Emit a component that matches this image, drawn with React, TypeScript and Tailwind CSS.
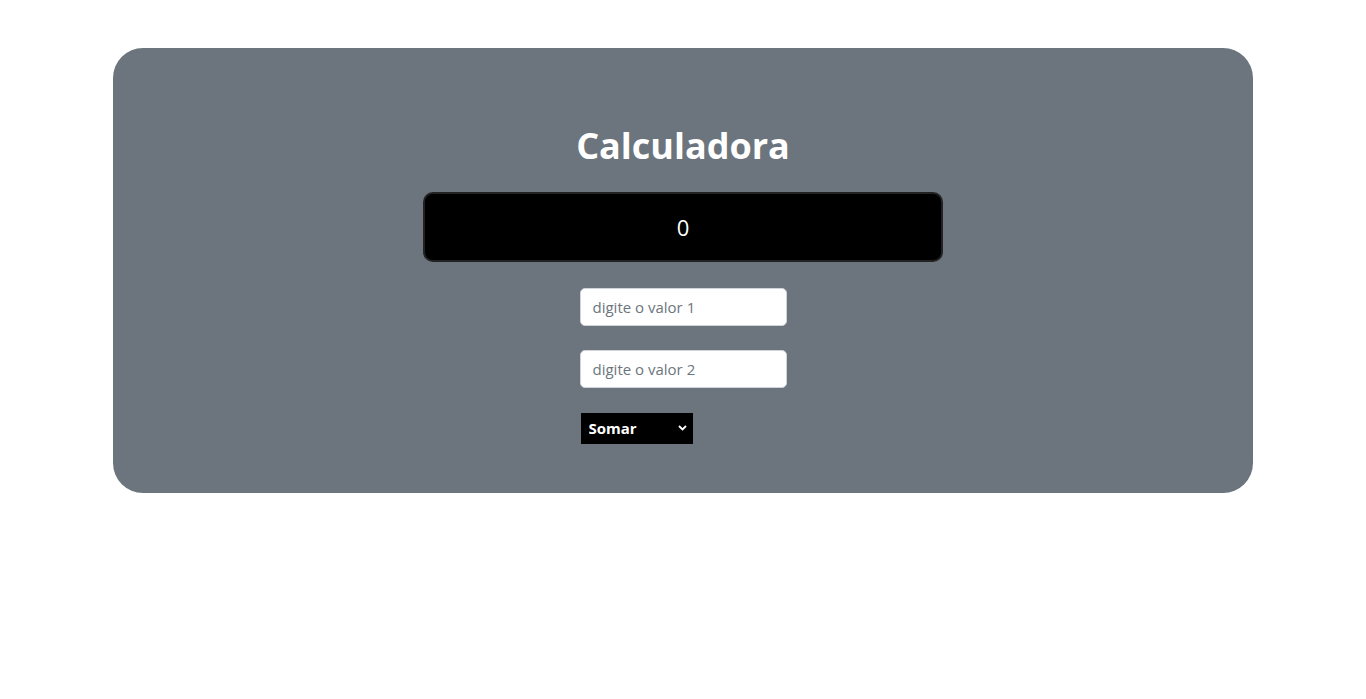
import React, { useState } from 'react';

export default function App() {
  const [v1, setV1] = useState('');
  const [v2, setV2] = useState('');
  const [op, setOp] = useState('somar');

  return (
    <div className="min-h-[699px] bg-white pt-12 font-['Open_Sans',sans-serif]">
      <div className="mx-auto w-[1140px] rounded-[30px] bg-[#6c757d] pt-[74px] pb-[49px]">
        <div className="flex flex-col items-center">
          <h1 className="text-[36px] font-bold leading-[48px] text-white">Calculadora</h1>
          <div className="mt-[22px] flex h-[70px] w-[520px] items-center justify-center rounded-[10px] border-2 border-[#222] bg-black text-[22px] text-white">
            0
          </div>
          <div className="mt-[26px] w-[207px]">
            <input
              value={v1}
              onChange={(e) => setV1(e.target.value)}
              placeholder="digite o valor 1"
              className="block h-[38px] w-full rounded-[5px] border border-[#ced4da] bg-white px-3 text-[15px] text-[#212529] placeholder:text-[#6c757d] outline-none"
            />
            <input
              value={v2}
              onChange={(e) => setV2(e.target.value)}
              placeholder="digite o valor 2"
              className="mt-6 block h-[38px] w-full rounded-[5px] border border-[#ced4da] bg-white px-3 text-[15px] text-[#212529] placeholder:text-[#6c757d] outline-none"
            />
            <div className="relative mt-[25px] ml-px w-[112px]">
              <select
                value={op}
                onChange={(e) => setOp(e.target.value)}
                className="block h-[31px] w-full appearance-none rounded-none bg-black pl-2 text-[15px] font-bold text-white outline-none"
              >
                <option value="somar">Somar</option>
                <option value="subtrair">Subtrair</option>
                <option value="multiplicar">Multiplicar</option>
                <option value="dividir">Dividir</option>
              </select>
              <svg
                className="pointer-events-none absolute right-[6px] top-[12px]"
                width="9"
                height="6"
                viewBox="0 0 9 6"
                fill="none"
              >
                <path d="M1 1l3.5 3.5L8 1" stroke="white" strokeWidth="1.8" />
              </svg>
            </div>
          </div>
        </div>
      </div>
    </div>
  );
}
